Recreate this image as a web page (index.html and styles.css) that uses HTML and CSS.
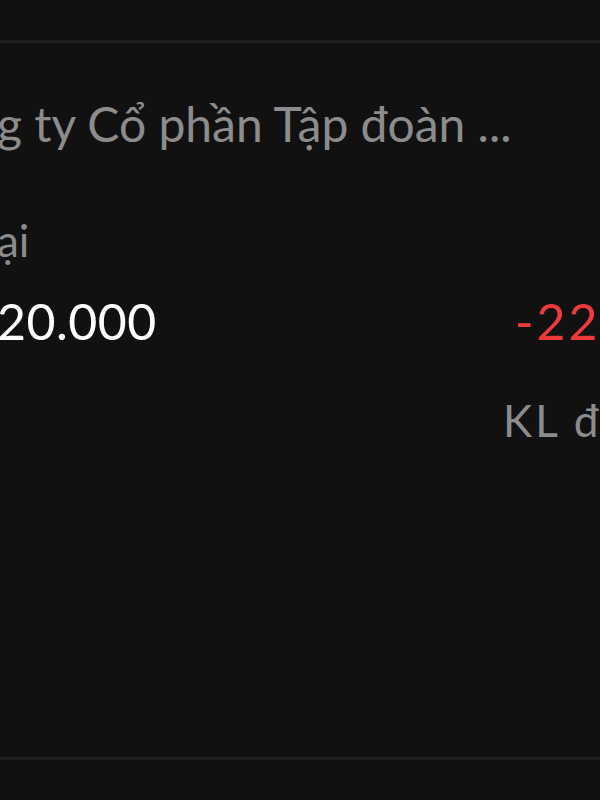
FILE: index.html
```html
<!DOCTYPE html>
<html lang="vi">
<head>
<meta charset="utf-8">
<link rel="stylesheet" href="styles.css">
</head>
<body>
<div class="screen">
  <div class="divider divider-top"></div>
  <section class="card">
    <div class="company">g ty Cổ phần Tập đoàn ...</div>
    <div class="label">ại</div>
    <div class="grid">
      <div class="price">20.000</div>
      <div class="change">-221</div>
      <div class="spacer"></div>
      <div class="volume">KL đ</div>
    </div>
  </section>
  <div class="divider divider-bottom"></div>
</div>
</body>
</html>
```

FILE: styles.css
```css
html, body {
  margin: 0;
  padding: 0;
  background: #111111;
}
body {
  width: 600px;
  height: 800px;
  overflow: hidden;
  font-family: "Lato", "Noto Sans", sans-serif;
}
.screen {
  display: flex;
  flex-direction: column;
  height: 800px;
}
.divider {
  height: 3px;
  background: #202020;
  flex: none;
}
.divider-top {
  margin-top: 40px;
}
.card {
  flex: 1;
  margin-left: -3px;
  white-space: nowrap;
}
.company {
  margin-top: 52px;
  font-size: 48px;
  line-height: 1.2;
  color: #8c8c8c;
}
.label {
  margin-top: 61px;
  font-size: 44px;
  line-height: 1.2;
  color: #8c8c8c;
}
.grid {
  display: grid;
  grid-template-columns: 506px auto;
  row-gap: 43px;
  margin-top: 25px;
}
.price {
  font-size: 50px;
  line-height: 1.2;
  color: #ffffff;
  letter-spacing: 0.5px;
}
.change {
  font-size: 50px;
  line-height: 1.2;
  color: #f03a3a;
  padding-left: 12px;
  letter-spacing: 3px;
}
.volume {
  font-size: 44px;
  line-height: 1.2;
  color: #8c8c8c;
  letter-spacing: 3px;
}
.divider-bottom {
  margin-bottom: 40px;
}
```
